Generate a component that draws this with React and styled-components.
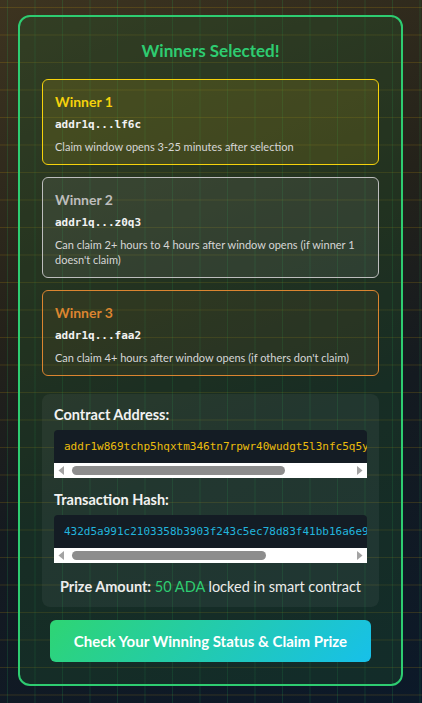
import React from "react";
import styled, { createGlobalStyle } from "styled-components";

const GlobalStyle = createGlobalStyle`
  html, body {
    margin: 0;
    padding: 0;
  }
  body {
    font-family: Lato, "Noto Sans", sans-serif;
    background: #0d1a2a;
  }
  * {
    box-sizing: border-box;
  }
`;

const Page = styled.div`
  min-height: 100vh;
  padding: 15px 19px 16px 18px;
  background-color: #1d1d1b;
  background-image: linear-gradient(rgba(234, 179, 8, 0.16) 1px, transparent 1px),
    linear-gradient(90deg, rgba(34, 197, 94, 0.16) 1px, transparent 1px),
    linear-gradient(158deg, #3d3420 0%, #24221a 38%, #141a20 62%, #0c1929 100%);
  background-size: 27.5px 27.5px, 27.5px 27.5px, 100% 100%;
  background-position: 7px 7px, 7px 7px, 0 0;
`;

const Card = styled.div`
  border: 2px solid #2ecc71;
  border-radius: 12px;
  padding: 22px;
  background: rgba(34, 90, 45, 0.3);
`;

const Title = styled.h2`
  margin: 0 0 16px;
  text-align: center;
  color: #2ecc71;
  font-size: 17px;
  line-height: 24px;
  font-weight: 700;
`;

const WinnerList = styled.div`
  display: flex;
  flex-direction: column;
  gap: 12px;
`;

const WinnerCard = styled.div`
  border: 1px solid ${(p) => p.$color};
  border-radius: 6px;
  padding: 12px 12px 10px;
  background: ${(p) => p.$bg};
`;

const WinnerName = styled.div`
  color: ${(p) => p.$color};
  font-size: 14px;
  line-height: 20px;
  font-weight: 700;
  margin-bottom: 5px;
`;

const Address = styled.div`
  font-family: "DejaVu Sans Mono", "Liberation Mono", monospace;
  font-size: 11px;
  line-height: 16px;
  font-weight: 700;
  color: #f2f2f2;
  margin-bottom: 6px;
`;

const Note = styled.div`
  font-size: 11px;
  line-height: 15px;
  color: #d6d6d6;
`;

const InfoBox = styled.div`
  margin-top: 18px;
  padding: 12px 12px 11px;
  border-radius: 8px;
  background: rgba(255, 255, 255, 0.05);
`;

const Label = styled.div`
  color: #f2f2f2;
  font-size: 14.5px;
  line-height: 18px;
  font-weight: 700;
  margin: ${(p) => (p.$first ? "0" : "13px")} 0 6px;
`;

const CodeBox = styled.div`
  background: #141c24;
  border-radius: 4px 4px 0 0;
  overflow: hidden;
`;

const CodeText = styled.div`
  padding: 9px 10px 8px;
  overflow: hidden;
  white-space: nowrap;
  font-family: "DejaVu Sans Mono", "Liberation Mono", monospace;
  font-size: 11px;
  line-height: 16px;
  color: ${(p) => p.$color};
`;

const ScrollBar = styled.div`
  display: flex;
  align-items: center;
  height: 15px;
  background: #fff;
`;

const ScrollArrow = styled.div`
  flex: 0 0 15px;
  height: 15px;
  display: flex;
  align-items: center;
  justify-content: center;
`;

const ScrollTrack = styled.div`
  flex: 1;
  height: 15px;
  padding: 3px;
`;

const ScrollThumb = styled.div`
  height: 9px;
  border-radius: 5px;
  background: #8d8d8d;
`;

const Prize = styled.div`
  margin-top: 15px;
  text-align: center;
  color: #ececec;
  font-size: 14.5px;
  line-height: 18px;

  strong {
    font-weight: 700;
  }
`;

const Ada = styled.span`
  color: #2ecc71;
`;

const ClaimButton = styled.button`
  display: block;
  width: 95%;
  margin: 13px auto 0;
  height: 42px;
  border: none;
  border-radius: 6px;
  background: linear-gradient(135deg, #2ed573 0%, #17c0ea 100%);
  color: #fff;
  font-family: inherit;
  font-size: 15px;
  font-weight: 700;
  cursor: pointer;
`;

const Arrow = ({ dir }) => (
  <svg width="7" height="9" viewBox="0 0 7 9">
    {dir === "left" ? (
      <path d="M6 0 L0.5 4.5 L6 9 Z" fill="#a3a3a3" />
    ) : (
      <path d="M1 0 L6.5 4.5 L1 9 Z" fill="#a3a3a3" />
    )}
  </svg>
);

const CodeField = ({ color, thumb, children }) => (
  <CodeBox>
    <CodeText $color={color}>{children}</CodeText>
    <ScrollBar>
      <ScrollArrow>
        <Arrow dir="left" />
      </ScrollArrow>
      <ScrollTrack>
        <ScrollThumb style={{ width: `${thumb}%` }} />
      </ScrollTrack>
      <ScrollArrow>
        <Arrow dir="right" />
      </ScrollArrow>
    </ScrollBar>
  </CodeBox>
);

const winners = [
  {
    name: "Winner 1",
    addr: "addr1q...lf6c",
    note: "Claim window opens 3-25 minutes after selection",
    color: "#f5d20c",
    bg: "rgba(250, 204, 21, 0.12)",
  },
  {
    name: "Winner 2",
    addr: "addr1q...z0q3",
    note: "Can claim 2+ hours to 4 hours after window opens (if winner 1 doesn't claim)",
    color: "#bdbdbd",
    bg: "rgba(200, 200, 200, 0.1)",
  },
  {
    name: "Winner 3",
    addr: "addr1q...faa2",
    note: "Can claim 4+ hours after window opens (if others don't claim)",
    color: "#db8530",
    bg: "rgba(205, 127, 50, 0.08)",
  },
];

export default function App() {
  return (
    <>
      <GlobalStyle />
      <Page>
        <Card>
          <Title>Winners Selected!</Title>
          <WinnerList>
            {winners.map((w) => (
              <WinnerCard key={w.name} $color={w.color} $bg={w.bg}>
                <WinnerName $color={w.color}>{w.name}</WinnerName>
                <Address>{w.addr}</Address>
                <Note>{w.note}</Note>
              </WinnerCard>
            ))}
          </WinnerList>
          <InfoBox>
            <Label $first>Contract Address:</Label>
            <CodeField color="#ecbc0c" thumb={77}>
              addr1w869tchp5hqxtm346tn7rpwr40wudgt5l3nfc5q5yc2dq7xk9m4gvs
            </CodeField>
            <Label>Transaction Hash:</Label>
            <CodeField color="#22b5dd" thumb={70}>
              432d5a991c2103358b3903f243c5ec78d83f41bb16a6e93b7f0c52de914a8c07
            </CodeField>
            <Prize>
              <strong>Prize Amount:</strong> <Ada>50 ADA</Ada> locked in smart
              contract
            </Prize>
          </InfoBox>
          <ClaimButton>Check Your Winning Status &amp; Claim Prize</ClaimButton>
        </Card>
      </Page>
    </>
  );
}
